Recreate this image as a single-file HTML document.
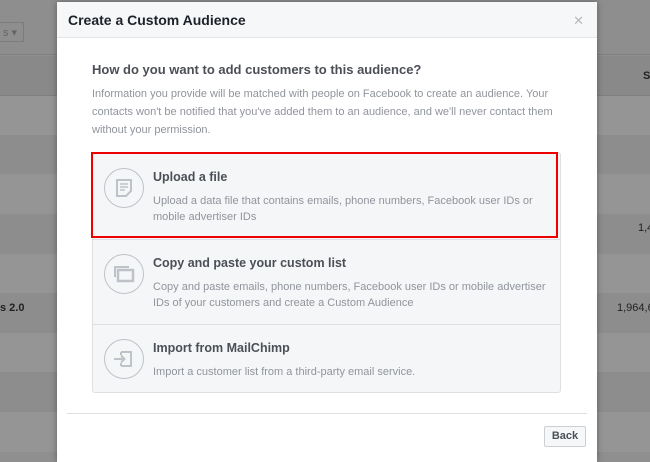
<!DOCTYPE html>
<html><head><meta charset="utf-8"><style>
*{margin:0;padding:0;box-sizing:border-box}
body{width:650px;height:455px;overflow:hidden;background:#8f8f8f;font-family:"Liberation Sans",Helvetica,Arial,sans-serif;position:relative}
.row{position:absolute;left:0;width:650px;height:40px}
.dlg{position:absolute;left:57px;top:2px;width:540px;height:460px;background:#fff;box-shadow:0 0 6px rgba(0,0,0,.35)}
.hd{height:36px;background:#f6f7f9;border-bottom:1px solid #e5e5e5;font-weight:bold;font-size:14px;color:#1d2129;padding:10px 0 0 11px}
.x{position:absolute;right:13px;top:11px;color:#b8b8b8;font-size:13px}
.q{position:absolute;left:35px;top:60px;font-weight:bold;font-size:13px;color:#4b4f56}
.p{position:absolute;left:35px;top:83px;font-size:11px;line-height:18px;color:#90949c;white-space:nowrap}
.box{position:absolute;left:35px;top:150px;width:469px;height:241px;border:1px solid #dddfe2;border-radius:3px;background:#f5f6f7}
.opt{position:absolute;left:0;width:467px;border-top:1px solid #dddfe2}
.ic{position:absolute;left:11px;width:40px;height:40px;border:1.5px solid #bec2c9;border-radius:50%}
.t{position:absolute;left:60px;font-weight:bold;font-size:12.5px;color:#4b4f56}
.d{position:absolute;left:60px;font-size:11px;line-height:16px;color:#90949c;white-space:nowrap}
.red{position:absolute;left:34px;top:150px;width:467px;height:86px;border:2px solid #e00}
.sep{position:absolute;left:10px;top:411px;width:520px;border-top:1px solid #dddfe2}
.back{position:absolute;left:487px;top:424px;width:42px;height:21px;border:1px solid #ccd0d5;background:#f6f7f9;font-weight:bold;font-size:11px;color:#4b4f56;text-align:center;line-height:19px;border-radius:2px}
</style></head><body>
<div class="row" style="top:0;height:55px;background:#8e8e8e;border-bottom:1px solid #7f7f7f"></div>
<div style="position:absolute;left:-10px;top:22px;width:34px;height:20px;border:1px solid #7c7c7c;font-size:11px;color:#666;padding:3px 0 0 12px">s ▾</div>
<div class="row" style="top:56px;background:#898989;border-bottom:1px solid #7f7f7f"></div>
<div class="row" style="top:96px;background:#959595"></div>
<div class="row" style="top:135px;background:#8d8d8d"></div>
<div class="row" style="top:174px;background:#959595"></div>
<div class="row" style="top:214px;background:#8d8d8d"></div>
<div class="row" style="top:254px;background:#959595"></div>
<div class="row" style="top:293px;background:#8d8d8d"></div>
<div class="row" style="top:333px;background:#959595"></div>
<div class="row" style="top:372px;background:#8d8d8d"></div>
<div class="row" style="top:412px;background:#959595"></div>
<div style="position:absolute;left:0;top:302px;font-size:11px;font-weight:bold;color:#222">s 2.0</div>
<div style="position:absolute;left:643px;top:70px;font-size:11px;font-weight:bold;color:#222">S</div>
<div style="position:absolute;left:638px;top:222px;font-size:11px;color:#222">1,4</div>
<div style="position:absolute;left:617px;top:302px;font-size:11px;color:#222">1,964,6</div>
<div class="dlg">
<div class="hd">Create a Custom Audience</div>
<div class="x">✕</div>
<div class="q">How do you want to add customers to this audience?</div>
<div class="p">Information you provide will be matched with people on Facebook to create an audience. Your<br>contacts won't be notified that you've added them to an audience, and we'll never contact them<br>without your permission.</div>
<div class="box">
 <div class="opt" style="top:0;height:86px;border-top:none">
  <div class="ic" style="top:15px"><svg width="40" height="40" viewBox="0 0 40 40" style="position:absolute;left:-1.5px;top:-1.5px"><path d="M13 12h14v11l-5 5h-9z" fill="none" stroke="#bec2c9" stroke-width="2"/><path d="M16 16h8M16 19h8M16 22h5" stroke="#bec2c9" stroke-width="1.5"/></svg></div>
  <div class="t" style="top:17px">Upload a file</div>
  <div class="d" style="top:40px">Upload a data file that contains emails, phone numbers, Facebook user IDs or<br>mobile advertiser IDs</div>
 </div>
 <div class="opt" style="top:86px;height:85px">
  <div class="ic" style="top:14px"><svg width="40" height="40" viewBox="0 0 40 40" style="position:absolute;left:-1.5px;top:-1.5px"><path d="M11 23V13h14" fill="none" stroke="#bec2c9" stroke-width="2"/><rect x="14" y="16" width="15" height="11" fill="none" stroke="#bec2c9" stroke-width="2.5"/></svg></div>
  <div class="t" style="top:16px">Copy and paste your custom list</div>
  <div class="d" style="top:39px">Copy and paste emails, phone numbers, Facebook user IDs or mobile advertiser<br>IDs of your customers and create a Custom Audience</div>
 </div>
 <div class="opt" style="top:171px;height:69px">
  <div class="ic" style="top:14px"><svg width="40" height="40" viewBox="0 0 40 40" style="position:absolute;left:-1.5px;top:-1.5px"><path d="M17 13h10v14H17M17 13v3M17 27v-3" fill="none" stroke="#bec2c9" stroke-width="2"/><path d="M10 20h10M17 16.5l3.5 3.5-3.5 3.5" fill="none" stroke="#bec2c9" stroke-width="2"/></svg></div>
  <div class="t" style="top:16px">Import from MailChimp</div>
  <div class="d" style="top:39px">Import a customer list from a third-party email service.</div>
 </div>
</div>
<div class="red"></div>
<div class="sep"></div>
<div class="back">Back</div>
</div>
</body></html>
